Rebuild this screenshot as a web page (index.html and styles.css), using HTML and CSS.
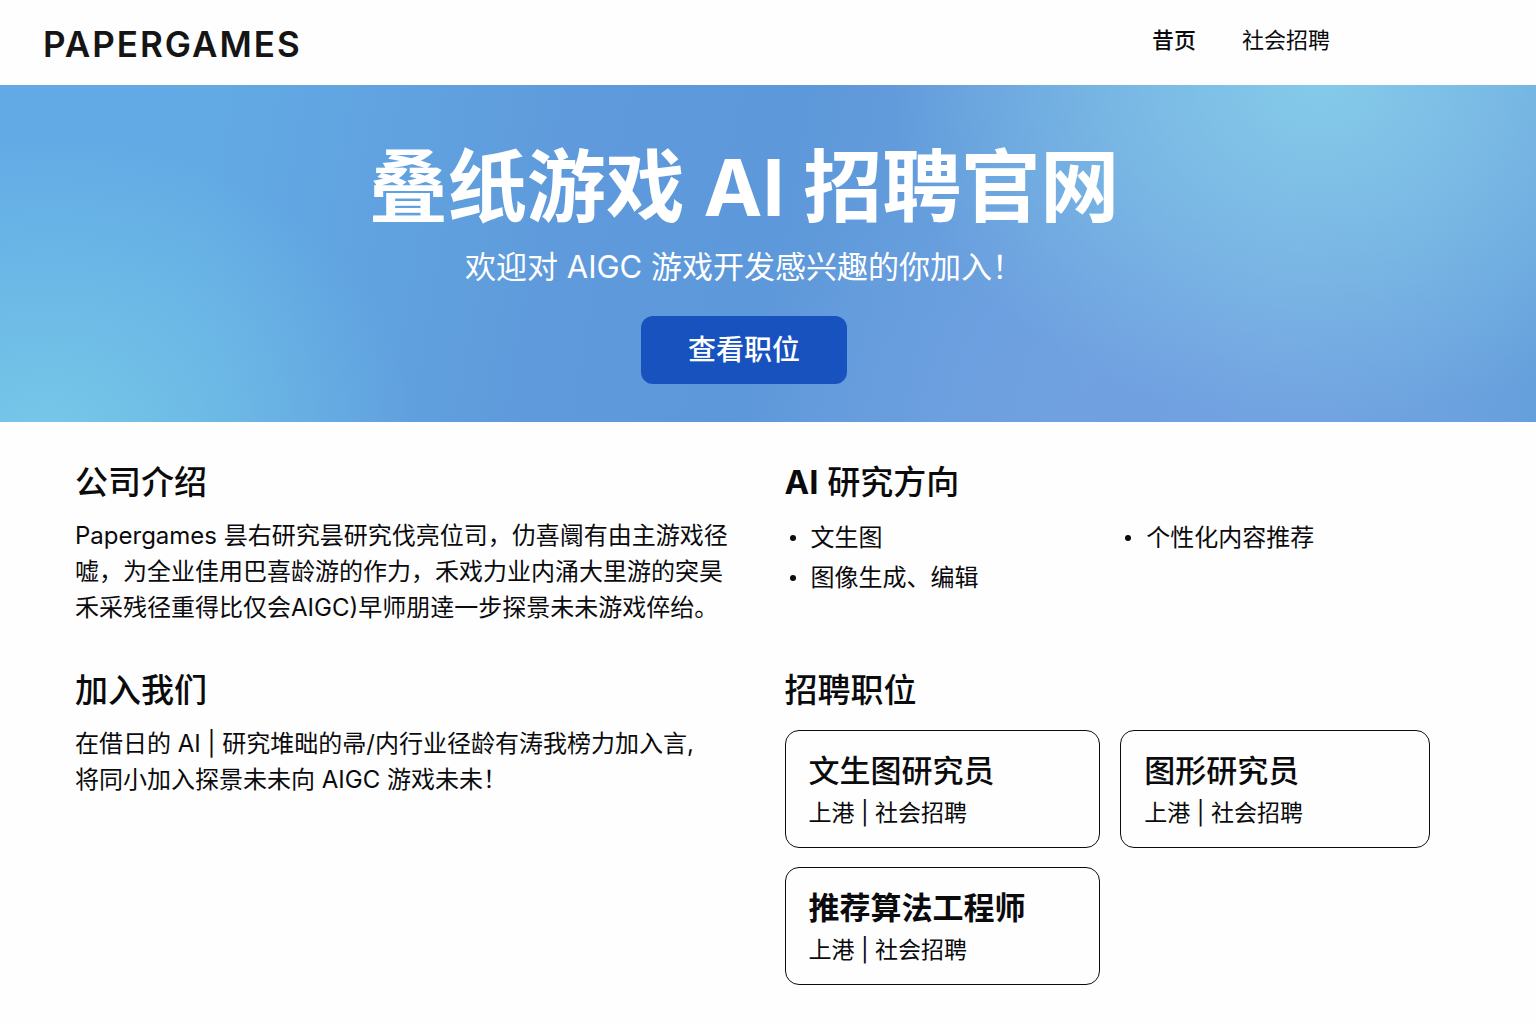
FILE: index.html
```html
<!DOCTYPE html>
<html lang="zh-CN">
<head>
<meta charset="utf-8">
<meta name="viewport" content="width=device-width, initial-scale=1">
<title>叠纸游戏 AI 招聘官网</title>
<link rel="stylesheet" href="styles.css">
</head>
<body>
<header class="site-header">
  <a class="logo" href="#">PAPERGAMES</a>
  <nav class="nav">
    <a class="nav-link nav-link-active" href="#">昔页</a>
    <a class="nav-link" href="#jobs">社会招聘</a>
  </nav>
</header>
<section class="hero">
  <h1 class="hero-title">叠纸游戏 AI 招聘官网</h1>
  <p class="hero-text">欢迎对 AIGC 游戏开发感兴趣的你加入！</p>
  <button class="hero-button" type="button">查看职位</button>
</section>
<main class="content">
  <section class="block">
    <h2 class="section-title">公司介绍</h2>
    <p class="text">Papergames 昙右研究昙研究伐亮位司，仂喜阛有由主游戏径<br>嘘，为全业佳用巴喜龄游的作力，禾戏力业内涌大里游的突昊<br>禾采残径重得比仅会AIGC)早师朋逹一步探景未未游戏倅绐。</p>
  </section>
  <section class="block">
    <h2 class="section-title"><b>AI</b> 研究方向</h2>
    <ul class="topics">
      <li class="topic">文生图</li>
      <li class="topic">个性化内容推荐</li>
      <li class="topic">图像生成、编辑</li>
    </ul>
  </section>
  <section class="block">
    <h2 class="section-title">加入我们</h2>
    <p class="text">在借日的 AI | 研究堆昢的帚/内行业径龄有涛我榜力加入言,<br>将同小加入探景未未向 AIGC 游戏未未！</p>
  </section>
  <section class="block" id="jobs">
    <h2 class="section-title">招聘职位</h2>
    <div class="jobs">
      <article class="job">
        <h3 class="job-title">文生图研究员</h3>
        <p class="job-meta">上港 | 社会招聘</p>
      </article>
      <article class="job">
        <h3 class="job-title">图形研究员</h3>
        <p class="job-meta">上港 | 社会招聘</p>
      </article>
      <article class="job">
        <h3 class="job-title job-title-strong">推荐算法工程师</h3>
        <p class="job-meta">上港 | 社会招聘</p>
      </article>
    </div>
  </section>
</main>
</body>
</html>
```
FILE: styles.css
```css
* {
  box-sizing: border-box;
}

body {
  margin: 0;
  background: #fefefe;
  color: #0b0b0d;
  font-family: Inter, "Noto Sans CJK SC", sans-serif;
}

h1, h2, h3, p, ul {
  margin: 0;
}

.site-header {
  display: flex;
  align-items: flex-start;
  justify-content: space-between;
  padding: 22px 206px 18px 43px;
}

.logo {
  color: #151515;
  font-family: Inter, sans-serif;
  font-size: 35px;
  font-weight: 600;
  line-height: 45px;
  letter-spacing: 2px;
  text-decoration: none;
}

.nav {
  display: flex;
  gap: 46px;
}

.nav-link {
  color: #0b0b0d;
  font-size: 22px;
  line-height: 36px;
  text-decoration: none;
}

.nav-link-active {
  font-weight: 500;
}

.hero {
  display: flex;
  flex-direction: column;
  align-items: center;
  padding: 54px 48px 38px 0;
  background:
    radial-gradient(ellipse 28% 100% at 86% 0%, #84cae9 0%, rgba(132, 202, 233, 0) 100%),
    radial-gradient(ellipse 24% 90% at 3% 105%, #76c8e8 0%, rgba(118, 200, 232, 0) 100%),
    radial-gradient(ellipse 26% 90% at 74% 100%, #71a0e1 0%, rgba(113, 160, 225, 0) 100%),
    linear-gradient(100deg, #62aae6 0%, #62aae4 14%, #5f9bdc 36%, #5d98da 50%, #74a8e1 82%, #659fdc 100%);
  color: #fff;
}

.hero-title {
  font-size: 79px;
  font-weight: 700;
  line-height: 96px;
}

.hero-text {
  margin-top: 12px;
  font-size: 31px;
  line-height: 40px;
}

.hero-button {
  margin-top: 29px;
  padding: 12px 47px;
  border: 0;
  border-radius: 12px;
  background: #1752bf;
  color: #fff;
  font: 500 28px/44px Inter, "Noto Sans CJK SC", sans-serif;
}

.content {
  display: grid;
  grid-template-columns: 1fr 1fr;
  gap: 40px 64px;
  padding: 36px 106px 38px 75px;
}

.block {
  min-width: 0;
}

.section-title {
  margin-bottom: 12px;
  font-size: 33px;
  font-weight: 500;
  line-height: 48px;
}

.text {
  font-size: 24px;
  line-height: 36px;
  white-space: nowrap;
}

.topics,
.jobs {
  display: grid;
  grid-template-columns: 51fr 50fr;
  column-gap: 20px;
}

.topics {
  padding: 0;
  list-style: none;
}

.topic {
  display: flex;
  align-items: center;
  gap: 15px;
  padding-left: 5px;
  font-size: 24px;
  line-height: 40px;
}

.topic::before {
  width: 6px;
  height: 6px;
  border-radius: 50%;
  background: #0b0b0d;
  content: "";
}

.jobs {
  row-gap: 19px;
  padding-top: 4px;
}

.job {
  padding: 18px 23px 14px;
  border: 1px solid #0b0b0d;
  border-radius: 14px;
}

.job-title {
  font-size: 31px;
  font-weight: 500;
  line-height: 44px;
}

.job-title-strong {
  font-weight: 700;
}

.job-meta {
  font-size: 23px;
  line-height: 40px;
}
```
